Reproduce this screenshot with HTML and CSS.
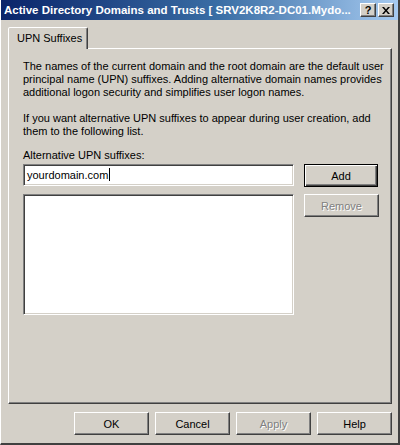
FILE: index.html
```html
<!doctype html>
<html lang="en">
  <head>
    <meta charset="UTF-8" />
    <title>Active Directory Domains and Trusts</title>
    <link rel="stylesheet" href="styles.css">
  </head>
  <body>
    <div class="window">
      <div class="titlebar">
        <span class="title">Active Directory Domains and Trusts [ SRV2K8R2-DC01.Mydo...</span>
        <span class="caption-btn help-btn">?</span>
        <span class="caption-btn close-btn">
          <svg width="8" height="7" viewBox="0 0 8 7">
            <path d="M0 0h2l2 2.5L6 0h2L5 3.5 8 7H6L4 4.5 2 7H0l3-3.5z" fill="#000" />
          </svg>
        </span>
      </div>

      <div class="body">
        <div class="tabs">
          <div class="tab">UPN Suffixes</div>
        </div>
        <div class="panel">
          <p>The names of the current domain and the root domain are the default user principal name (UPN) suffixes. Adding alternative domain names provides additional logon security and simplifies user logon names.</p>
          <p>If you want alternative UPN suffixes to appear during user creation, add them to the following list.</p>
          <label class="field-label">Alternative UPN suffixes:</label>
          <div class="row">
            <div class="textbox">yourdomain.com<span class="caret"></span></div>
            <div class="btn default">Add</div>
          </div>
          <div class="row">
            <div class="listbox"></div>
            <div class="btn disabled">Remove</div>
          </div>
        </div>

        <div class="footer">
          <div class="btn">OK</div>
          <div class="btn">Cancel</div>
          <div class="btn disabled">Apply</div>
          <div class="btn">Help</div>
        </div>
      </div>
    </div>
  </body>
</html>
```

FILE: styles.css
```css
:root {
  --face: #d4d0c8;
  --shadow: #808080;
  --dark: #404040;
  --light: #ffffff;
}

* {
  margin: 0;
  padding: 0;
  box-sizing: border-box;
}

body {
  font-family: 'Liberation Sans', Arial, sans-serif;
  font-size: 11px;
  color: #000;
  background: var(--face);
  width: 400px;
  height: 445px;
  overflow: hidden;
}

.window {
  width: 400px;
  height: 445px;
  background: var(--face);
  border-left: 1px solid var(--light);
  border-right: 2px solid var(--dark);
  border-bottom: 2px solid var(--dark);
  display: flex;
  flex-direction: column;
}

/* title bar */
.titlebar {
  height: 20px;
  background: linear-gradient(to right, #0a246a, #3a6ea5 55%, #a6caf0);
  display: flex;
  align-items: center;
  padding: 0 4px 0 3px;
  gap: 2px;
}

.title {
  flex: 1;
  min-width: 0;
  color: #fff;
  font-weight: bold;
  font-size: 11.5px;
  white-space: nowrap;
  overflow: hidden;
}

.caption-btn {
  flex: none;
  width: 16px;
  height: 14px;
  background: var(--face);
  border: 1px solid;
  border-color: var(--light) var(--dark) var(--dark) var(--light);
  box-shadow: inset -1px -1px 0 var(--shadow);
  display: flex;
  align-items: center;
  justify-content: center;
  font-weight: bold;
  font-size: 11px;
}

/* content */
.body {
  flex: 1;
  padding: 7px 6px 0 7px;
  display: flex;
  flex-direction: column;
}

.tabs {
  display: flex;
  height: 21px;
  position: relative;
  z-index: 1;
}

.tab {
  width: 80px;
  height: 22px;
  padding: 4px 0 0 8px;
  background: var(--face);
  border: 1px solid;
  border-bottom: none;
  border-color: var(--light) var(--dark) transparent var(--light);
  box-shadow: inset -1px 0 0 var(--shadow);
  border-radius: 2px 2px 0 0;
}

.panel {
  height: 356px;
  border: 1px solid;
  border-color: var(--light) var(--dark) var(--dark) var(--light);
  box-shadow: inset -1px -1px 0 var(--shadow);
  padding: 11px 2px 0 14px;
  display: flex;
  flex-direction: column;
}

.panel p {
  line-height: 13px;
  margin-bottom: 13px;
  width: 364px;
}

.field-label {
  line-height: 13px;
  margin-top: -2px;
}

.row {
  display: flex;
  gap: 10px;
  align-items: flex-start;
  margin-top: 2px;
}

.row + .row {
  margin-top: 7px;
}

.textbox,
.listbox {
  width: 271px;
  background: #fff;
  border: 1px solid;
  border-color: var(--shadow) var(--light) var(--light) var(--shadow);
  box-shadow: inset 1px 1px 0 var(--dark), inset -1px -1px 0 var(--face);
}

.textbox {
  height: 22px;
  padding: 4px 0 0 3px;
  display: flex;
}

.caret {
  width: 1px;
  height: 13px;
  background: #000;
  margin-left: 1px;
  margin-top: -1px;
}

.listbox {
  height: 121px;
}

.btn {
  width: 75px;
  height: 23px;
  display: flex;
  align-items: center;
  justify-content: center;
  background: var(--face);
  border: 1px solid;
  border-color: var(--light) var(--dark) var(--dark) var(--light);
  box-shadow: inset -1px -1px 0 var(--shadow);
}

.btn.default {
  border: 1px solid #000;
  box-shadow: inset 1px 1px 0 var(--light), inset -1px -1px 0 var(--dark), inset -2px -2px 0 var(--shadow);
  width: 74px;
}

.btn.disabled {
  color: var(--shadow);
  text-shadow: 1px 1px 0 var(--light);
}

.footer {
  display: flex;
  justify-content: flex-end;
  gap: 6px;
  margin-top: 8px;
}
```
